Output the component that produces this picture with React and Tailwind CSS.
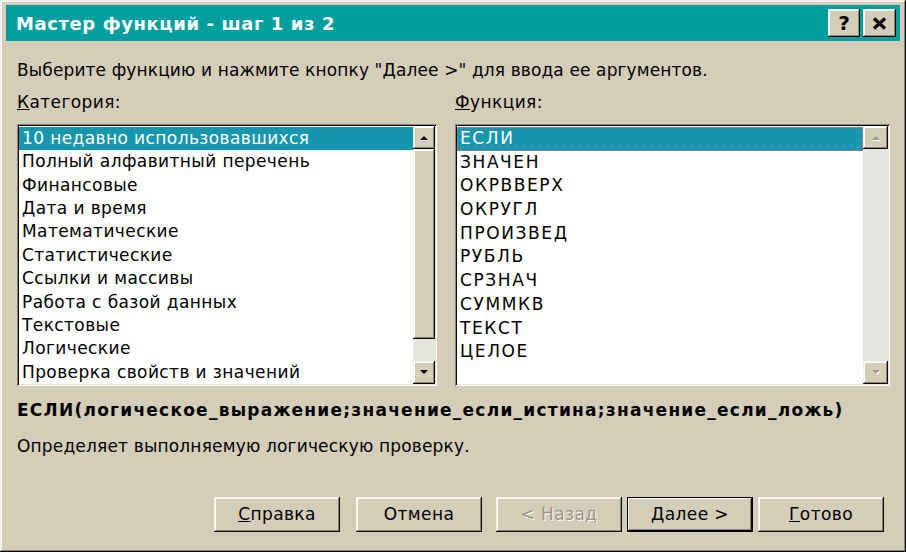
import React from "react";

const raised =
  "shadow-[inset_-1px_-1px_#0a0a0a,inset_1px_1px_#f4f1ea,inset_-2px_-2px_#8a8576,inset_2px_2px_#ffffff]";
const sunken =
  "shadow-[inset_1px_1px_#8a8576,inset_-1px_-1px_#ffffff,inset_2px_2px_#0a0a0a,inset_-2px_-2px_#e8e4da]";

const categories = [
  "10 недавно использовавшихся",
  "Полный алфавитный перечень",
  "Финансовые",
  "Дата и время",
  "Математические",
  "Статистические",
  "Ссылки и массивы",
  "Работа с базой данных",
  "Текстовые",
  "Логические",
  "Проверка свойств и значений",
];

const functions = [
  "ЕСЛИ",
  "ЗНАЧЕН",
  "ОКРВВЕРХ",
  "ОКРУГЛ",
  "ПРОИЗВЕД",
  "РУБЛЬ",
  "СРЗНАЧ",
  "СУММКВ",
  "ТЕКСТ",
  "ЦЕЛОЕ",
];

function Arrow({ up, disabled }) {
  return (
    <svg width="10" height="6" viewBox="0 0 10 6">
      {disabled && (
        <path d={up ? "M2 6 L6 2 L10 6 Z" : "M2 1 L10 1 L6 5 Z"} fill="#ffffff" />
      )}
      <path
        d={up ? "M1 5 L5 1 L9 5 Z" : "M1 0 L9 0 L5 4 Z"}
        fill={disabled ? "#a59d86" : "#000000"}
      />
    </svg>
  );
}

function ScrollButton({ up, disabled }) {
  return (
    <div className={`h-[23px] w-full shrink-0 bg-[#d4cdb8] flex items-center justify-center ${raised}`}>
      <Arrow up={up} disabled={disabled} />
    </div>
  );
}

function ListBox({ items, scroll, focused, wide }) {
  return (
    <div className={`h-[262px] bg-white p-[2px] flex ${sunken}`}>
      <div className="flex-1 flex flex-col pt-px">
        {items.map((it, i) => (
          <div
            key={it}
            className={`h-[23.7px] leading-[23px] pl-[3px] text-[17px] whitespace-nowrap ${
              wide ? "tracking-[1.6px]" : "tracking-[0.4px]"
            } ${i === 0 ? "bg-[#1596ae] text-white" : "text-black"} ${
              i === 0 && focused ? "outline outline-1 outline-dotted outline-[#e87a5a] -outline-offset-1" : ""
            }`}
          >
            {it}
          </div>
        ))}
      </div>
      {scroll === "active" ? (
        <div className="w-[22px] flex flex-col bg-[#e6e6de]">
          <ScrollButton up />
          <div className={`h-[190px] bg-[#d4cdb8] ${raised}`} />
          <div className="flex-1" />
          <ScrollButton />
        </div>
      ) : (
        <div className="w-[25px] flex flex-col justify-between bg-[#e3e6de]">
          <ScrollButton up disabled />
          <ScrollButton disabled />
        </div>
      )}
    </div>
  );
}

function Button({ children, disabled, isDefault }) {
  return (
    <div
      className={`w-[126px] h-[35px] bg-[#d4cdb8] flex items-center justify-center text-[17px] tracking-[0.4px] ${
        isDefault
          ? "shadow-[inset_0_0_0_1px_#000,inset_-2px_-2px_#0a0a0a,inset_2px_2px_#ffffff,inset_-3px_-3px_#8a8576]"
          : raised
      } ${disabled ? "text-[#9a9482] [text-shadow:1px_1px_#ffffff]" : "text-black"}`}
    >
      {children}
    </div>
  );
}

export default function App() {
  return (
    <div
      className={`w-[906px] h-[552px] bg-[#d4cdb8] p-[6px] pt-[5px] flex flex-col ${raised}`}
      style={{ fontFamily: '"DejaVu Sans", "Liberation Sans", sans-serif' }}
    >
      {/* Title bar */}
      <div className="h-[36px] shrink-0 bg-[#009f9d] flex items-center justify-between pl-[10px] pr-[4px]">
        <span className="text-white font-bold text-[18px] tracking-[0.6px]">
          Мастер функций - шаг 1 из 2
        </span>
        <div className="flex items-center gap-[3px]">
          <div className={`w-[32px] h-[28px] bg-[#d4cdb8] flex items-center justify-center font-bold text-[20px] ${raised}`}>
            ?
          </div>
          <div className={`w-[33px] h-[28px] bg-[#d4cdb8] flex items-center justify-center ${raised}`}>
            <svg width="15" height="13" viewBox="0 0 15 13">
              <path d="M2 1.5 L13 11.5 M13 1.5 L2 11.5" stroke="#000" strokeWidth="3.2" />
            </svg>
          </div>
        </div>
      </div>

      {/* Body */}
      <div className="flex-1 flex flex-col px-[11px] text-black">
        <div className="mt-[18px] h-[22px] leading-[22px] text-[17px] tracking-[0.12px]">
          Выберите функцию и нажмите кнопку "Далее &gt;" для ввода ее аргументов.
        </div>

        <div className="mt-[10px] grid grid-cols-[420px_435px] gap-x-[18px]">
          <div className="h-[22px] leading-[22px] text-[17px] tracking-[0.4px]">
            <u>К</u>атегория:
          </div>
          <div className="h-[22px] leading-[22px] text-[17px] tracking-[0.4px]">
            <u>Ф</u>ункция:
          </div>
          <div className="mt-[11px]">
            <ListBox items={categories} scroll="active" />
          </div>
          <div className="mt-[11px]">
            <ListBox items={functions} scroll="disabled" focused wide />
          </div>
        </div>

        <div className="mt-[13px] h-[22px] leading-[22px] text-[17px] font-bold tracking-[1.25px]">
          ЕСЛИ(логическое_выражение;значение_если_истина;значение_если_ложь)
        </div>
        <div className="mt-[14px] h-[22px] leading-[22px] text-[17px] tracking-[0.17px]">
          Определяет выполняемую логическую проверку.
        </div>

        <div className="mt-auto mb-[14px] flex justify-end pr-[5px]">
          <Button>
            <u>С</u>правка
          </Button>
          <div className="w-[16px]" />
          <Button>Отмена</Button>
          <div className="w-[14px]" />
          <Button disabled>&lt; Назад</Button>
          <div className="w-[5px]" />
          <Button isDefault>Далее &gt;</Button>
          <div className="w-[5px]" />
          <Button>
            <u>Г</u>отово
          </Button>
        </div>
      </div>
    </div>
  );
}
